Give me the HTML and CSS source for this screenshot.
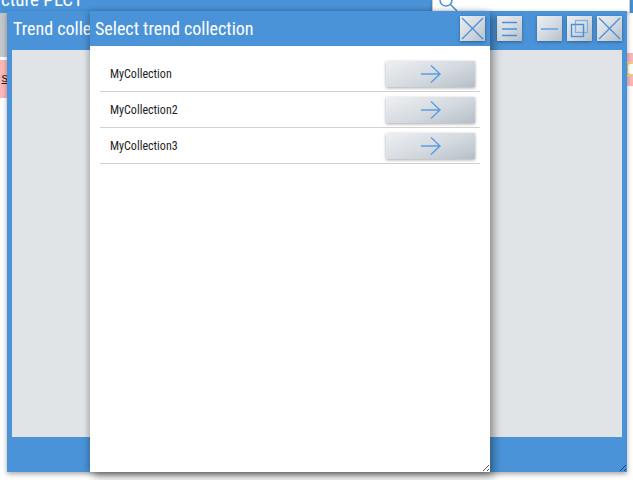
FILE: index.html
```html
<!DOCTYPE html>
<html>
<head>
<meta charset="utf-8">
<link rel="stylesheet" href="styles.css">
</head>
<body>
<div class="page">
  <header class="page-head">
    <div class="page-title">Picture PLC1</div>
    <div class="search">
      <svg class="search-icon" width="24" height="20" viewBox="0 0 24 20"><circle cx="9" cy="2" r="6" fill="none" stroke="#4a90d9" stroke-width="1.5"/><line x1="13.5" y1="6.5" x2="20" y2="13" stroke="#4a90d9" stroke-width="1.5"/></svg>
    </div>
  </header>
  <div class="page-body">
    <div class="side-left">
      <div class="strip-gray"></div>
      <div class="strip-pink"><span class="link">s</span></div>
    </div>
    <div class="side-right">
      <div class="pink-a"></div>
      <div class="yellow-ico"></div>
      <div class="pink-b"></div>
    </div>
  </div>
</div>

<section class="window back">
  <div class="win-title">
    <span class="win-caption">Trend collection</span>
    <div class="win-tools">
      <button class="tbtn"><svg viewBox="0 0 25 25"><path d="M5 6.5h15M5 13h15M5 19.5h15" stroke="#4a90d9" stroke-width="1.4" fill="none"/></svg></button>
      <span class="tgap"></span>
      <button class="tbtn"><svg viewBox="0 0 25 25"><path d="M4 13h17" stroke="#7db0e4" stroke-width="2" fill="none"/></svg></button>
      <button class="tbtn"><svg viewBox="0 0 25 25"><rect x="8.5" y="4.5" width="12" height="12" fill="none" stroke="#7db0e4" stroke-width="1.2"/><rect x="4.5" y="8.5" width="12" height="12" fill="none" stroke="#4a90d9" stroke-width="1.4"/></svg></button>
      <button class="tbtn"><svg viewBox="0 0 25 25"><path d="M2 2L23 23M23 2L2 23" stroke="#4a90d9" stroke-width="1.3" fill="none"/></svg></button>
    </div>
  </div>
  <div class="win-content gray"></div>
  <div class="win-foot"><span class="grip light"></span></div>
</section>

<section class="window dialog">
  <div class="win-title short">
    <span class="win-caption">Select trend collection</span>
    <div class="win-tools">
      <button class="tbtn"><svg viewBox="0 0 25 25"><path d="M2 2L23 23M23 2L2 23" stroke="#4a90d9" stroke-width="1.3" fill="none"/></svg></button>
    </div>
  </div>
  <div class="dlg-body">
    <ul class="list">
      <li class="row"><span class="row-name">MyCollection</span><button class="go"><svg viewBox="0 0 22 20"><path d="M1 10H20M11 1.5L20 10L11 18.5" stroke="#5b9de0" stroke-width="1.4" fill="none"/></svg></button></li>
      <li class="row"><span class="row-name">MyCollection2</span><button class="go"><svg viewBox="0 0 22 20"><path d="M1 10H20M11 1.5L20 10L11 18.5" stroke="#5b9de0" stroke-width="1.4" fill="none"/></svg></button></li>
      <li class="row"><span class="row-name">MyCollection3</span><button class="go"><svg viewBox="0 0 22 20"><path d="M1 10H20M11 1.5L20 10L11 18.5" stroke="#5b9de0" stroke-width="1.4" fill="none"/></svg></button></li>
    </ul>
    <span class="grip dark"></span>
  </div>
</section>
</body>
</html>
```
FILE: styles.css
```css
* { box-sizing: border-box; }
html, body { margin: 0; padding: 0; }
body {
  width: 633px;
  height: 480px;
  overflow: hidden;
  position: relative;
  background: #ffffff;
  font-family: "Roboto Condensed", "Liberation Sans Narrow", "Roboto", sans-serif;
}
.page { width: 633px; height: 480px; display: flex; flex-direction: column; }
.page-head {
  height: 13px;
  background: #4a93d8;
  display: flex;
  align-items: flex-end;
  overflow: visible;
  position: relative;
  z-index: 0;
}
.page-title {
  flex: 1;
  color: #fff;
  font-size: 19px;
  line-height: 19px;
  margin-left: -14px;
  margin-top: -10px;
  align-self: flex-start;
  white-space: nowrap;
}
.search {
  width: 198px;
  height: 13px;
  margin-right: 3px;
  background: #fff;
  border: 1px solid #c9ccd0;
  border-top: none;
  box-shadow: 0 1px 4px rgba(0,0,0,0.25);
  overflow: hidden;
  position: relative;
}
.search-icon { display: block; margin-left: 4px; margin-top: -2px; }
.page-body { flex: 1; display: flex; justify-content: space-between; }
.side-left { width: 8px; display: flex; flex-direction: column; }
.strip-gray { height: 44px; background: #c3c6ca; }
.strip-pink {
  margin-top: 3px;
  height: 38px;
  background: #fcb8b8;
  font-family: "Liberation Sans", sans-serif;
  font-size: 13px;
  line-height: 36px;
  text-align: right;
  overflow: hidden;
}
.link { text-decoration: underline; color: #222; display: inline-block; width: 8px; text-indent: -2px; }
.side-right { width: 8px; display: flex; flex-direction: column; padding-top: 40px; }
.pink-a { height: 9px; background: #fcb8b8; }
.yellow-ico { height: 14px; border: 2px solid #f4cf73; border-right: none; border-radius: 4px 0 0 4px; margin-left: 1px; }
.pink-b { height: 10px; background: #fcb8b8; }

.window {
  position: absolute;
  display: flex;
  flex-direction: column;
  background: #4a93d8;
}
.back {
  left: 7px; top: 11px; width: 620px; height: 461px;
  box-shadow: 0 2px 5px rgba(0,0,0,0.35);
}
.dialog {
  left: 90px; top: 11px; width: 400px; height: 461px;
  box-shadow: 4px 5px 8px rgba(0,0,0,0.35), -2px 0 6px rgba(0,0,0,0.2);
}
.win-title {
  height: 39px;
  display: flex;
  align-items: flex-start;
  padding: 5px 5px 0 6px;
}
.win-title.short { height: 35px; padding-left: 5px; }
.win-caption {
  flex: 1;
  color: #fff;
  font-size: 18px;
  line-height: 24px;
  padding-top: 1px;
  white-space: nowrap;
  overflow: hidden;
}
.win-tools { display: flex; gap: 5px; }
.tgap { width: 5px; }
.tbtn {
  width: 25px; height: 25px;
  padding: 0; border: none;
  background: linear-gradient(135deg, #eceff2 0%, #d5dbe1 50%, #b4c0cb 100%);
  box-shadow: 0 1px 3px rgba(0,0,0,0.35);
  display: block;
}
.tbtn svg { width: 25px; height: 25px; display: block; }
.win-content.gray { margin: 0 5px; flex: 1; background: #e1e4e7; }
.win-foot { height: 35px; position: relative; }
.grip {
  position: absolute; right: 1px; bottom: 1px; width: 9px; height: 9px;
}
.grip.light { background: repeating-linear-gradient(135deg, transparent 0 2px, #1c3d5e 2px 3px); clip-path: polygon(100% 0, 100% 100%, 0 100%); }
.grip.dark { background: repeating-linear-gradient(135deg, transparent 0 2px, #555 2px 3px); clip-path: polygon(100% 0, 100% 100%, 0 100%); }
.dlg-body { flex: 1; background: #fff; position: relative; padding: 10px 10px 0 10px; }
.list { list-style: none; margin: 0; padding: 0; }
.row {
  height: 36px;
  display: flex;
  align-items: center;
  justify-content: space-between;
  border-bottom: 1px solid #d2d2d2;
  padding: 0 5px 0 10px;
}
.row-name { font-family: "Roboto Condensed", "Liberation Sans Narrow", "Roboto", sans-serif; font-size: 12px; color: #1e1e1e; }
.go {
  width: 89px; height: 26px; padding: 0; border: none;
  background: linear-gradient(160deg, #eef0f3 0%, #d3d9df 55%, #b5bfc9 100%);
  box-shadow: 0 1px 3px rgba(0,0,0,0.35);
  display: flex; align-items: center; justify-content: center;
}
.go svg { width: 22px; height: 20px; }
```
